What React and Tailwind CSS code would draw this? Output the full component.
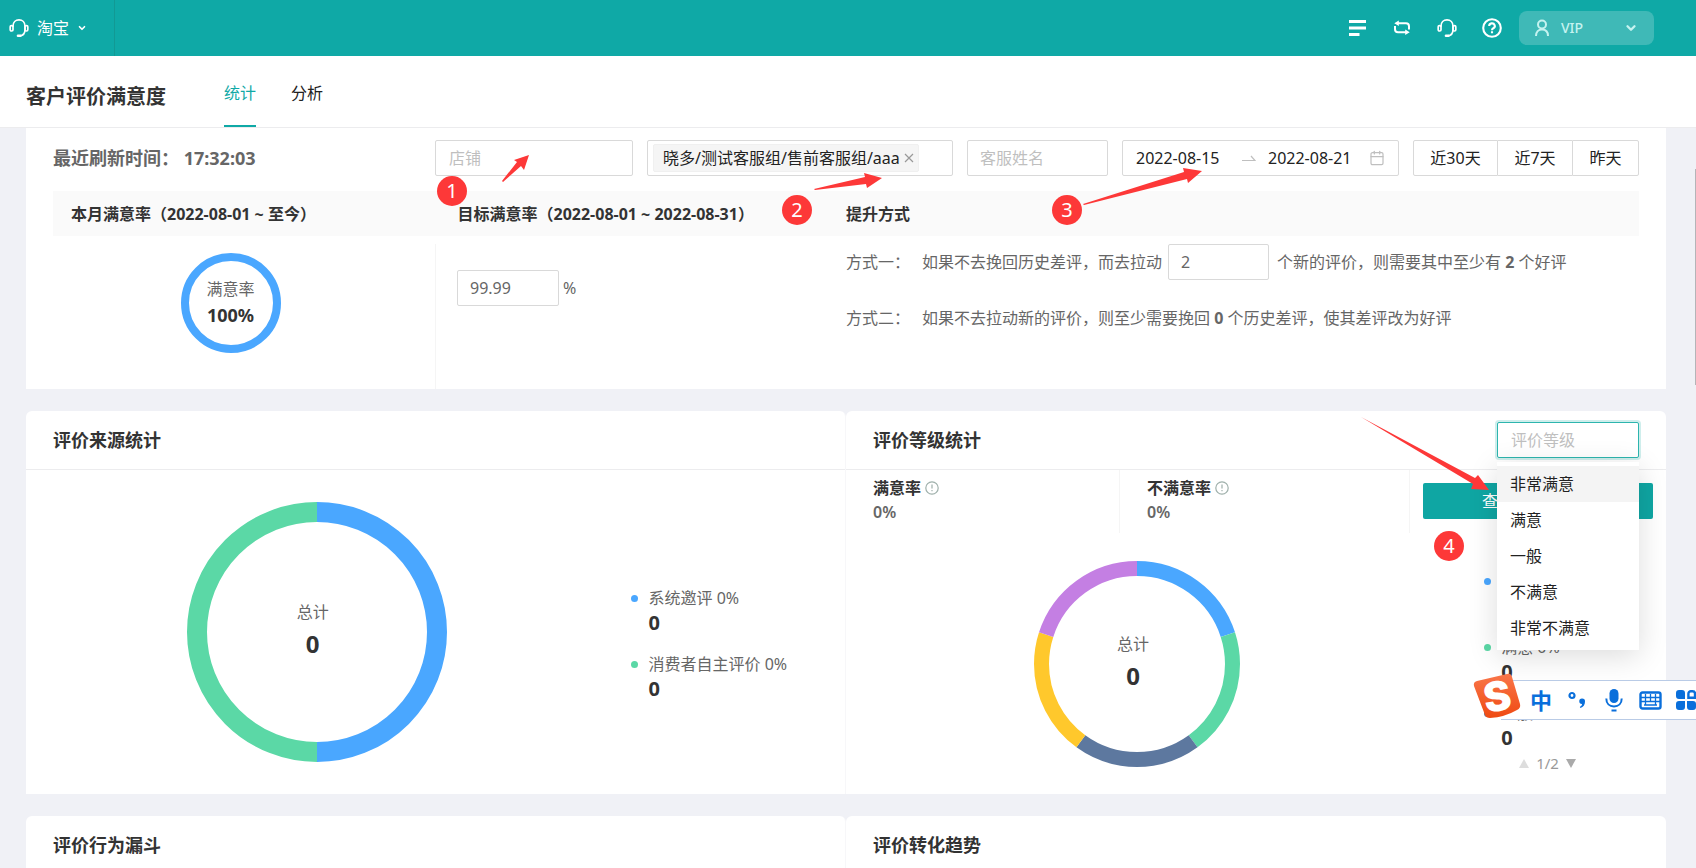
import { useState } from 'react';
import { ChevronDown, Calendar } from 'lucide-react';

const levels = ['非常满意', '满意', '一般', '不满意', '非常不满意'];

const sourceData = [
  { name: '系统邀评', percent: 50, color: '#4aa7ff' },
  { name: '消费者自主评价', percent: 50, color: '#5bd8a6' },
];

const levelData = [
  { name: '非常满意', percent: 20, color: '#4aa7ff' },
  { name: '满意', percent: 20, color: '#5bd8a6' },
  { name: '一般', percent: 20, color: '#5d789f' },
  { name: '不满意', percent: 20, color: '#ffc82c' },
  { name: '非常不满意', percent: 20, color: '#c47fe3' },
];

const marks = [
  { id: 1, pos: 'left-[437px] top-[176px]' },
  { id: 2, pos: 'left-[782px] top-[195px]' },
  { id: 3, pos: 'left-[1052px] top-[195px]' },
  { id: 4, pos: 'left-[1434px] top-[531px]' },
];

function HeadsetIcon({ className }) {
  return (
    <svg viewBox="0 0 20 20" className={className} fill="none" stroke="currentColor" strokeWidth="1.7" strokeLinecap="round">
      <path d="M4 8.2C4 4.4 6.6 1.9 10 1.9s6 2.5 6 6.3v3.6c0 3.4-1.9 5.6-5 6" />
      <rect x="1.2" y="7.6" width="2.8" height="5.4" rx="1.2" />
      <rect x="16" y="7.6" width="2.8" height="5.4" rx="1.2" />
      <path d="M9 17.8h2.4" strokeWidth="2.6" />
    </svg>
  );
}

function Donut({ data, size, stroke, children }) {
  const r = (size - stroke) / 2;
  let start = 0;
  return (
    <div className="relative shrink-0 self-start">
      <svg width={size} height={size} viewBox={`0 0 ${size} ${size}`} className="block">
        {data.map((d) => {
          const offset = -start;
          start += d.percent;
          return (
            <circle
              key={d.name}
              cx={size / 2}
              cy={size / 2}
              r={r}
              fill="none"
              stroke={d.color}
              strokeWidth={stroke}
              pathLength="100"
              strokeDasharray={`${d.percent} ${100 - d.percent}`}
              strokeDashoffset={offset}
              transform={`rotate(-90 ${size / 2} ${size / 2})`}
            />
          );
        })}
      </svg>
      <div className="absolute inset-0 flex flex-col items-center justify-center">{children}</div>
    </div>
  );
}

function Total() {
  return (
    <div className="pr-2 pb-2 text-center">
      <div className="text-base leading-8 text-[#666]">总计</div>
      <div className="text-2xl leading-8 font-bold text-[#333]">0</div>
    </div>
  );
}

function Legend({ data }) {
  return (
    <ul className="flex flex-col gap-4">
      {data.map((d) => (
        <li key={d.name} className="flex gap-[10px]">
          <span className="mt-[9px] h-[7px] w-[7px] shrink-0 rounded-full" style={{ background: d.color }} />
          <div>
            <div className="text-base leading-6 text-[#666]">{d.name} 0%</div>
            <div className="text-xl leading-[26px] font-bold text-[#333]">0</div>
          </div>
        </li>
      ))}
    </ul>
  );
}

function Rate({ label }) {
  return (
    <div className="h-[63px] border-r border-[#f5f5f5] pt-[6px] pl-[27px]">
      <div className="flex items-center gap-1 text-base leading-6 font-bold text-[#333]">
        {label}
        <svg viewBox="0 0 14 14" className="h-[14px] w-[14px]" fill="none" stroke="#9fb0ab" strokeWidth="1.2">
          <circle cx="7" cy="7" r="6.2" />
          <path d="M7 3.6v4M7 9v1.3" />
        </svg>
      </div>
      <div className="text-base leading-6 font-semibold text-[#666]">0%</div>
    </div>
  );
}

export default function App() {
  const [target, setTarget] = useState('99.99');
  const [count, setCount] = useState('2');
  const [level, setLevel] = useState('');

  return (
    <div className="relative flex h-screen flex-col overflow-hidden bg-[#f0f1f6] font-['Noto_Sans','Noto_Sans_CJK_SC',sans-serif] text-base text-[#333]">
      {/* Top bar */}
      <header className="flex h-14 shrink-0 items-center justify-between bg-[#0fa9a6] pr-[42px] text-white">
        <button className="flex h-full w-[115px] items-center border-r border-[#129994] pl-[9px]">
          <HeadsetIcon className="h-5 w-5" />
          <span className="ml-2 text-base leading-6">淘宝</span>
          <ChevronDown className="ml-2 h-[10px] w-[10px]" strokeWidth={4} />
        </button>
        <div className="flex items-center">
          <button aria-label="菜单" className="mr-[26px]">
            <svg viewBox="0 0 18 18" className="h-[18px] w-[18px]" fill="currentColor">
              <path d="M0 1h17v3H0zM0 7.5h17v3H0zM0 14h10.500v3H0z" />
            </svg>
          </button>
          <button aria-label="切换" className="mr-[26px]">
            <svg viewBox="0 0 18 18" className="h-[18px] w-[18px]" fill="none" stroke="currentColor" strokeWidth="2">
              <path d="M4.500 4.200H13a3 3 0 0 1 3 3v3.300M13.500 13.300H5a3 3 0 0 1-3-3V7" />
              <path d="M5.800 1.500v5.400L1.300 4.200zM12.200 10.600V16l4.500-2.700z" fill="currentColor" stroke="none" />
            </svg>
          </button>
          <button aria-label="客服" className="mr-[25px]">
            <HeadsetIcon className="h-5 w-5" />
          </button>
          <button aria-label="帮助" className="mr-[17px]">
            <svg viewBox="0 0 20 20" className="h-5 w-5" fill="none" stroke="currentColor" strokeWidth="2.1">
              <circle cx="10" cy="10" r="8.800" />
              <path d="M7.200 8a2.800 2.600 0 1 1 4.200 2.200c-.9.600-1.400 1-1.400 2M10 13.200v2" />
            </svg>
          </button>
          <button className="flex h-[34px] w-[135px] items-center rounded-lg bg-[#3fb9b7] pr-4 pl-4 text-[#c5f3f0]">
            <svg viewBox="0 0 14 18" className="h-[18px] w-[14px]" fill="none" stroke="currentColor" strokeWidth="2">
              <circle cx="7" cy="5.500" r="4" />
              <path d="M1 17c0-4.200 2.400-6.500 6-6.500s6 2.300 6 6.500" />
            </svg>
            <span className="ml-3 flex-1 text-left text-sm font-medium">VIP</span>
            <ChevronDown className="h-[14px] w-[14px]" strokeWidth={4} />
          </button>
        </div>
      </header>

      {/* Page title + tabs */}
      <div className="flex h-[72px] shrink-0 border-b border-[#ececee] bg-white pl-[26px]">
        <h1 className="w-[198px] pt-[27px] text-xl leading-7 font-bold">客户评价满意度</h1>
        <nav className="flex gap-[35px]">
          <a href="#stat" className="border-b-2 border-[#0fa9a6] pt-[25px] leading-6 text-[#0fa9a6]">统计</a>
          <a href="#analysis" className="pt-[25px] leading-6 text-[#222]">分析</a>
        </nav>
      </div>

      <main className="flex flex-col gap-[22px] pr-[30px] pl-[26px]">
        <section className="bg-white">
          {/* Filters */}
          <div className="flex items-center px-[27px] pt-3">
            <h2 className="flex-1 text-lg leading-9 font-bold whitespace-nowrap text-[#666]">最近刷新时间： 17:32:03</h2>
            <div className="flex h-9 items-stretch gap-[14px]">
              <input aria-label="店铺" placeholder="店铺" className="w-[198px] rounded-xs border border-[#d9d9d9] px-[13px] placeholder:text-[#bfbfbf]" />
              <div className="flex w-[306px] items-center rounded-xs border border-[#d9d9d9] px-[5px]">
                <span className="flex h-7 items-center rounded-xs border border-[#f0f0f0] bg-[#f5f5f5] pr-1 pl-[9px] whitespace-nowrap text-[#222]">
                  晓多/测试客服组/售前客服组/aaa
                  <button aria-label="移除" className="ml-1">
                    <svg viewBox="0 0 10 10" className="h-[10px] w-[10px]" stroke="#999" strokeWidth="1.200">
                      <path d="M1 1l8 8M9 1l-8 8" />
                    </svg>
                  </button>
                </span>
              </div>
              <input aria-label="客服姓名" placeholder="客服姓名" className="w-[141px] rounded-xs border border-[#d9d9d9] px-3 placeholder:text-[#bfbfbf]" />
              <div className="flex w-[277px] items-center rounded-xs border border-[#d9d9d9] pr-[13px] pl-[13px] text-[#222]">
                <input aria-label="开始日期" defaultValue="2022-08-15" className="w-[106px]" />
                <svg viewBox="0 0 14 8" className="mr-3 h-2 w-[14px]" fill="none" stroke="#bfbfbf" strokeWidth="1.200">
                  <path d="M0 6.500h13L9 2" />
                </svg>
                <input aria-label="结束日期" defaultValue="2022-08-21" className="w-[90px] flex-1" />
                <Calendar className="h-4 w-4 text-[#bfbfbf]" strokeWidth={1.8} />
              </div>
              <div className="flex text-[#222]">
                <button className="w-[85px] rounded-l-xs border border-[#d9d9d9]">近30天</button>
                <button className="w-[74px] border-y border-[#d9d9d9]">近7天</button>
                <button className="w-[67px] rounded-r-xs border border-[#d9d9d9]">昨天</button>
              </div>
            </div>
          </div>

          <div className="mx-[27px] mt-[15px] grid h-[45px] grid-cols-[1fr_1fr_2fr] items-center bg-[#fafafa] leading-6 font-bold">
            <div className="pl-[18px]">本月满意率（2022-08-01 ~ 至今）</div>
            <div className="pl-2">目标满意率（2022-08-01 ~ 2022-08-31）</div>
            <div>提升方式</div>
          </div>

          <div className="mt-2 grid h-[145px] grid-cols-[1fr_1fr_2fr] text-[#666]">
            <div className="flex justify-center border-r border-[#f5f5f5] pt-[9px]">
              <Donut data={[{ name: '满意率', percent: 100, color: '#4aa7ff' }]} size={100} stroke={8}>
                <div className="leading-6">满意率</div>
                <div className="text-lg leading-7 font-bold text-[#333]">100%</div>
              </Donut>
            </div>
            <div className="flex items-start pt-[26px] pl-[21px]">
              <input
                aria-label="目标满意率"
                value={target}
                onChange={(e) => setTarget(e.target.value)}
                className="h-9 w-[102px] rounded-xs border border-[#d9d9d9] px-3"
              />
              <span className="ml-1 leading-9">%</span>
            </div>
            <div className="whitespace-nowrap">
              <div className="flex h-9 items-center">
                <span className="w-[76px]">方式一：</span>
                <span>如果不去挽回历史差评，而去拉动</span>
                <input
                  aria-label="新的评价数"
                  value={count}
                  onChange={(e) => setCount(e.target.value)}
                  className="mr-2 ml-[6px] h-9 w-[101px] rounded-xs border border-[#d9d9d9] px-3"
                />
                <span>个新的评价，则需要其中至少有 <b>2</b> 个好评</span>
              </div>
              <div className="mt-5 flex h-9 items-center">
                <span className="w-[76px]">方式二：</span>
                <span>如果不去拉动新的评价，则至少需要挽回 <b>0</b> 个历史差评，使其差评改为好评</span>
              </div>
            </div>
          </div>
        </section>

        <div className="grid grid-cols-2">
          {/* Source */}
          <section className="rounded-t-md border-r border-[#f7f7f9] bg-white">
            <h2 className="h-[59px] border-b border-[#ececee] pl-[27px] text-lg leading-[58px] font-bold">评价来源统计</h2>
            <div className="flex py-8">
              <div className="flex w-[71%] justify-center">
                <Donut data={sourceData} size={260} stroke={20}>
                  <Total />
                </Donut>
              </div>
              <div className="flex items-center pt-6 pl-6">
                <Legend data={sourceData} />
              </div>
            </div>
          </section>

          {/* Level */}
          <section className="rounded-t-md bg-white">
            <div className="flex h-[59px] items-center justify-between border-b border-[#ececee] pr-[27px] pl-[27px]">
              <h2 className="text-lg leading-[58px] font-bold">评价等级统计</h2>
              <div className="relative">
                <input
                  role="combobox"
                  aria-expanded="true"
                  aria-controls="levels"
                  aria-label="评价等级"
                  placeholder="评价等级"
                  value={level}
                  onChange={(e) => setLevel(e.target.value)}
                  className="block h-9 w-[142px] rounded-xs border border-[#2db5ae] bg-white px-[13px] ring-2 ring-[#cfeeec] outline-none placeholder:text-[#bfbfbf]"
                />
                <ul id="levels" role="listbox" className="absolute top-10 left-0 z-10 w-full bg-white py-1 text-[#222] shadow-[0_6px_28px_rgba(0,0,0,0.14)]">
                  {levels.map((l, i) => (
                    <li
                      key={l}
                      role="option"
                      aria-selected={l === level}
                      onClick={() => setLevel(l)}
                      className={`h-9 px-[13px] leading-9 ${i === 0 ? 'bg-[#f4f4f4]' : ''}`}
                    >
                      {l}
                    </li>
                  ))}
                </ul>
              </div>
            </div>
            <div className="grid grid-cols-[274fr_290fr_256fr]">
              <Rate label="满意率" />
              <Rate label="不满意率" />
              <div className="px-[13px] pt-[13px]">
                <button className="h-9 w-full rounded-xs bg-[#0fa6a3] text-white">查看满意度明细</button>
              </div>
            </div>
            <div className="flex">
              <div className="flex w-[71%] justify-center pt-7">
                <Donut data={levelData} size={206} stroke={15}>
                  <Total />
                </Donut>
              </div>
              <div className="pt-9 pl-14">
                <Legend data={levelData.slice(0, 3)} />
                <div className="flex items-center gap-[7px] pl-[35px] text-[15px] leading-6 text-[#999]">
                  <button aria-label="上一页" className="h-0 w-0 border-x-[5px] border-b-[9px] border-x-transparent border-b-[#ddd]" />
                  1/2
                  <button aria-label="下一页" className="h-0 w-0 border-x-[5px] border-t-[9px] border-x-transparent border-t-[#aaa]" />
                </div>
              </div>
            </div>
          </section>
        </div>

        <div className="grid grid-cols-2">
          <section className="h-[360px] rounded-t-md border-r border-[#f7f7f9] bg-white">
            <h2 className="pl-[27px] text-lg leading-[58px] font-bold">评价行为漏斗</h2>
          </section>
          <section className="h-[360px] rounded-t-md bg-white">
            <h2 className="pl-[27px] text-lg leading-[58px] font-bold">评价转化趋势</h2>
          </section>
        </div>
      </main>

      {/* Scroll thumb */}
      <div className="absolute top-[169px] right-0 h-[216px] w-px bg-[#b5b5b8]" />

      {/* Input method bar */}
      <div className="absolute top-[673px] right-0 z-20 flex h-[47px] items-end text-[#0a6fdb]">
        <svg viewBox="0 0 48 47" className="z-10 h-[47px] w-12">
          <defs>
            <linearGradient id="ime" x1="0" y1="0" x2="0" y2="1">
              <stop offset="0" stopColor="#f9764a" />
              <stop offset="1" stopColor="#ef4a12" />
            </linearGradient>
          </defs>
          <path d="M4 8 34 1q4-1 5 3l8 27q1 4-3 6-12 7-27 8-4 0-5-3L1 13q-1-4 3-5z" fill="url(#ime)" />
          <text x="24" y="38" textAnchor="middle" fontFamily="Inter" fontWeight="900" fontSize="41" fill="#fff" transform="rotate(-10 24 23)">S</text>
        </svg>
        <div className="-ml-5 flex h-10 w-[195px] items-center border-y border-[#b9cbe6] bg-white pl-[29px]">
          <span className="w-6 text-[22px] leading-8 font-bold">中</span>
          <svg viewBox="0 0 18 18" className="ml-[14px] h-[18px] w-[18px]">
            <circle cx="4" cy="4.500" r="2.500" fill="none" stroke="currentColor" strokeWidth="2.200" />
            <path d="M14 7.500a3 3 0 0 1 3 3.200c0 3-1.700 5.300-4.500 6.300l-.7-1c1.400-.7 2.200-1.700 2.300-2.900a2.800 2.800 0 0 1-.1-5.600z" fill="currentColor" />
          </svg>
          <svg viewBox="0 0 18 24" className="ml-[19px] h-6 w-[18px]" fill="none" stroke="currentColor" strokeWidth="2">
            <rect x="4.500" y="1" width="9" height="14" rx="4.500" fill="currentColor" stroke="none" />
            <path d="M1.300 10.500c0 5 3.200 8 7.700 8s7.700-3 7.700-8M6.500 22.500h5" />
          </svg>
          <svg viewBox="0 0 24 19" className="ml-4 h-[19px] w-6" fill="none" stroke="currentColor">
            <rect x="1.500" y="1.500" width="20" height="16" rx="2" strokeWidth="2.400" />
            <path d="M2 6.500h19M2 10.500h19M6.500 3v11M11.500 3v8M16.500 3v11M5 14h13" strokeWidth="1.300" />
          </svg>
          <div className="ml-[13px] w-5 overflow-hidden">
            <svg viewBox="0 0 22 20" className="h-5 w-[22px]" fill="currentColor">
              <path d="M3 0h3a3 3 0 0 1 3 3v6H3a3 3 0 0 1-3-3V3a3 3 0 0 1 3-3zM0 14a3 3 0 0 1 3-3h6v6a3 3 0 0 1-3 3H3a3 3 0 0 1-3-3zM11 11h6a3 3 0 0 1 3 3v3a3 3 0 0 1-3 3h-3a3 3 0 0 1-3-3z" />
              <path d="M15 1.200h1.500A2.500 2.500 0 0 1 19 3.700v4.100h-6.600V3.700A2.500 2.500 0 0 1 15 1.200z" fill="none" stroke="currentColor" strokeWidth="2.400" />
            </svg>
          </div>
        </div>
      </div>

      {/* Step markers */}
      <svg width="1696" height="868" className="pointer-events-none absolute top-0 left-0 z-20" fill="#fd3838">
        <path d="M502 181 517 162 514 160 529 155 524 170 521 166 503 182z" />
        <path d="M814 189 865 177 864 173 882 178 867 188 866 184 815 190z" />
        <path d="M1083 204 1184 172 1183 168 1202 171 1188 183 1187 179 1084 205z" />
        <path d="M1361 417 1475 478 1478 475 1489 490 1471 489 1473 484z" />
      </svg>
      {marks.map((m) => (
        <span key={m.id} className={`absolute z-20 flex h-[30px] w-[30px] items-center justify-center rounded-full bg-[#fd3838] text-xl leading-none text-white ${m.pos}`}>
          {m.id}
        </span>
      ))}
    </div>
  );
}
